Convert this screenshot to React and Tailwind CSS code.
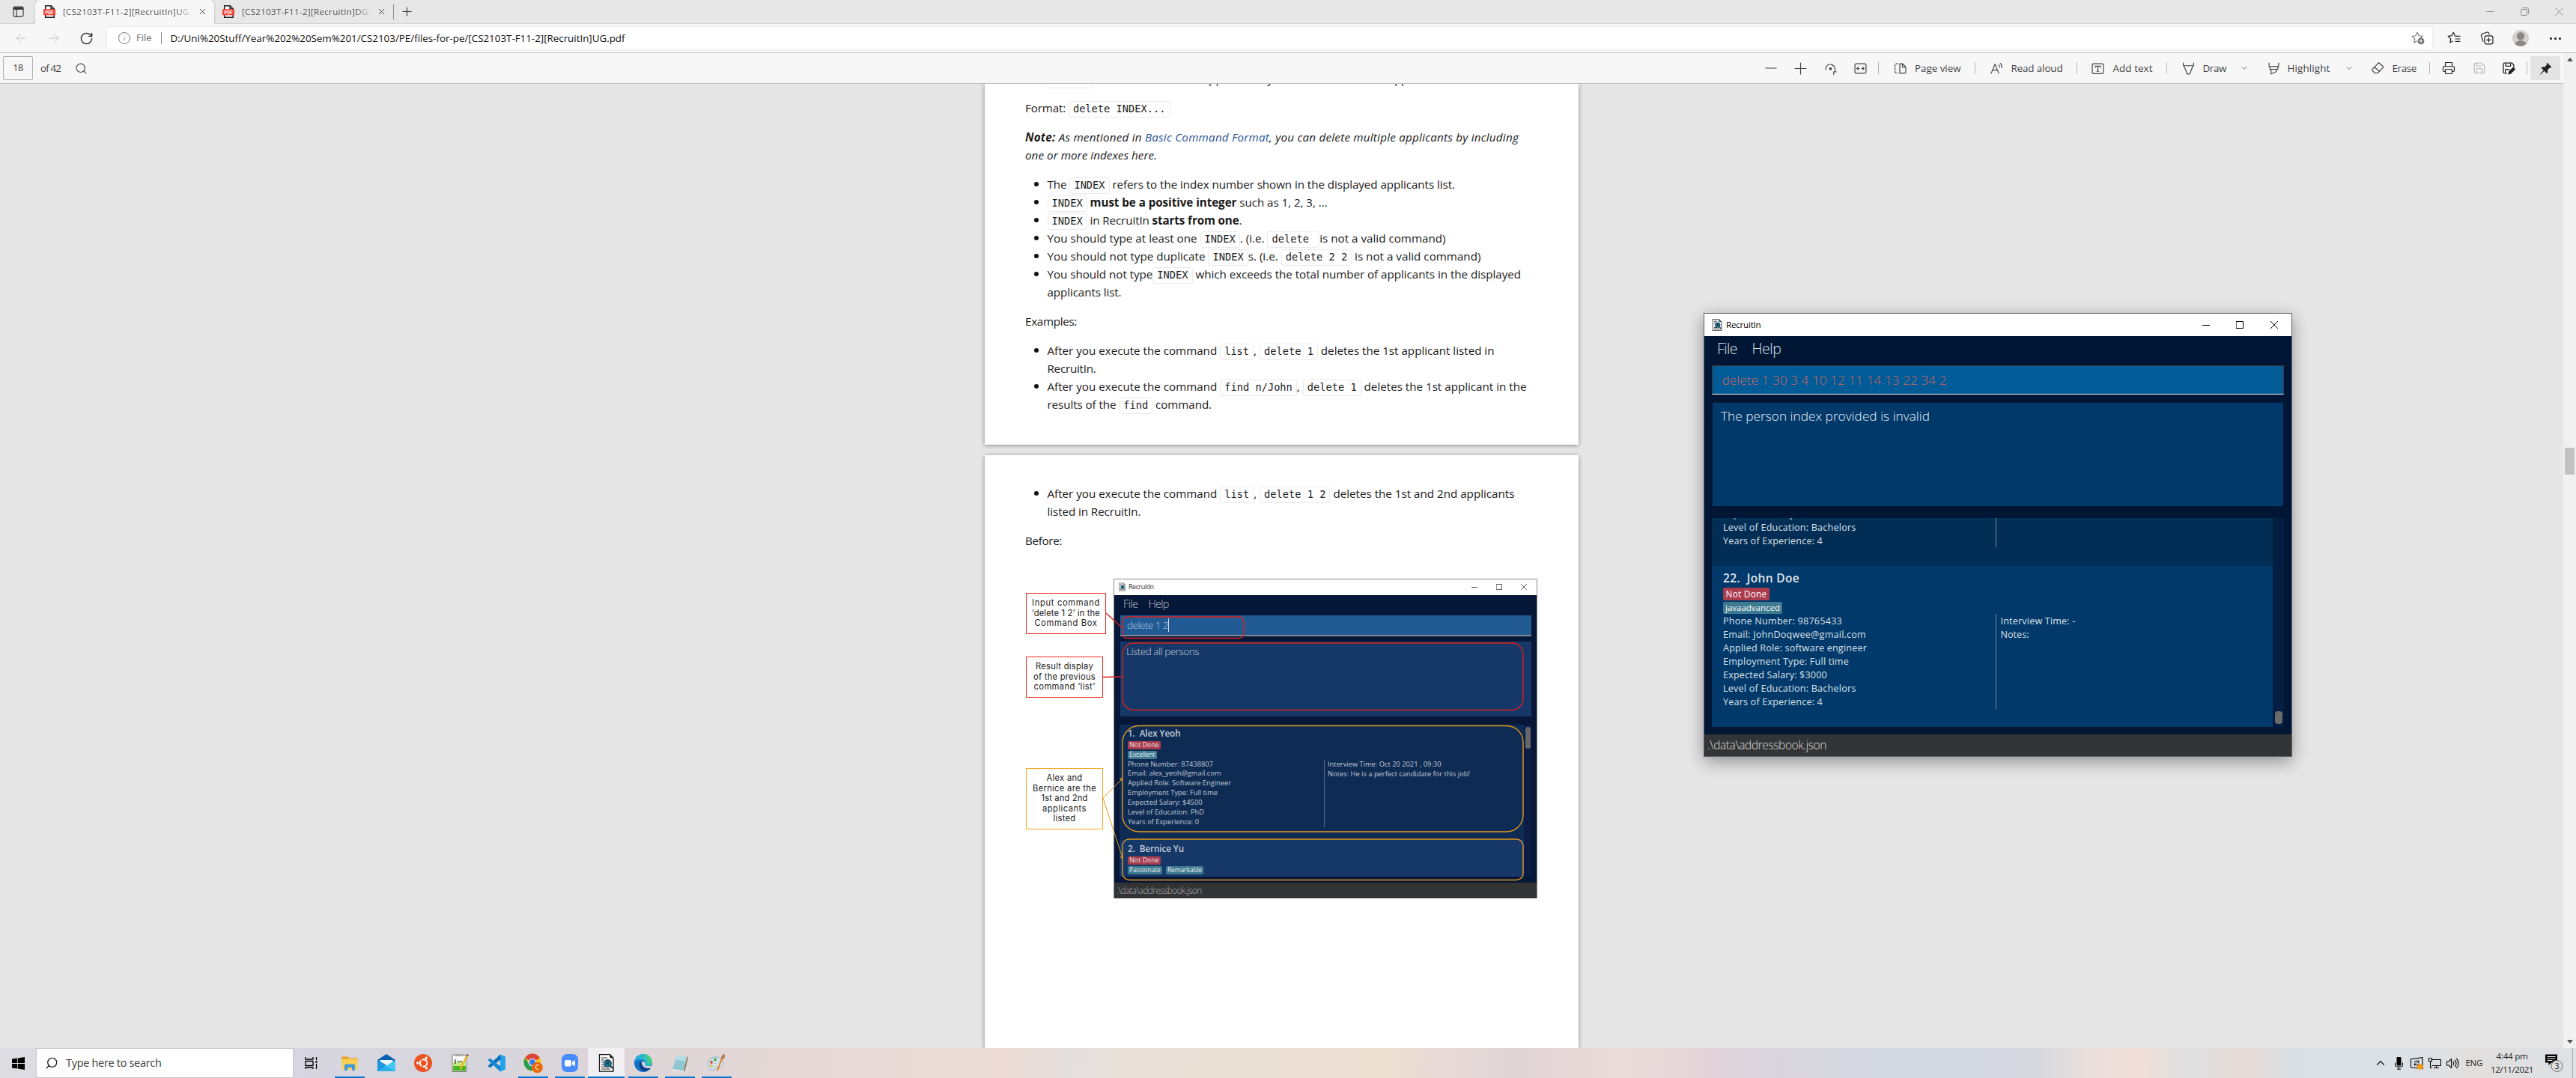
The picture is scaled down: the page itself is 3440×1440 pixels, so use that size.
import React, { useLayoutEffect, useRef } from "react";
import {
  RotateCw, Search, Printer, Save, ArrowLeft, ArrowRight, Info, Plus, X, ChevronDown, ChevronUp,
} from "lucide-react";

/* One line of text, tracked so that it fills exactly `w` pixels. */
function Fit({ w, className = "", children }) {
  const inner = useRef(null);
  useLayoutEffect(() => {
    const el = inner.current;
    el.style.letterSpacing = "0px";
    const natural = el.getBoundingClientRect().width;
    let chars = el.textContent.length;
    el.querySelectorAll("code").forEach((c) => (chars -= c.textContent.length));
    el.style.letterSpacing = `${(w - natural) / Math.max(chars, 1)}px`;
  });
  return (
    <span className={"inline-block whitespace-pre " + className} style={{ width: w }}>
      <span ref={inner}>{children}</span>
    </span>
  );
}

function Code({ children }) {
  return (
    <code className="inline-block h-[22px] whitespace-pre rounded-[3px] border border-[#ebebeb] px-[5px] align-baseline font-['DejaVu_Sans_Mono',monospace] text-[13.7px] leading-[19px] tracking-normal text-[#1c1c1c]">
      {children}
    </code>
  );
}

function Sep({ className = "" }) {
  return <span className={"h-4 w-px shrink-0 bg-[#b5b5b5] " + className} />;
}

function Svg({ s = 16, vb = "0 0 16 16", className = "", children, sw = 1.1 }) {
  return (
    <svg width={s} height={s} viewBox={vb} fill="none" stroke="currentColor" strokeWidth={sw} strokeLinecap="round" strokeLinejoin="round" className={"shrink-0 " + className}>
      {children}
    </svg>
  );
}

/* ---------- Browser chrome ---------- */

function PdfIcon() {
  return (
    <svg width="16" height="17" viewBox="0 0 16 17" className="shrink-0">
      <path d="M2.7.8h7.6l3.9 3.9v11.5H2.7z" fill="#fff" stroke="#1a1a1a" strokeWidth="1.5" />
      <path d="M10 .8v4.1h4.2" fill="none" stroke="#1a1a1a" strokeWidth="1.3" />
      <rect x="0" y="5.2" width="16" height="8.2" fill="#f0453c" />
      <text x="8" y="11.5" textAnchor="middle" fontSize="5.6" fontWeight="700" fill="#fff" fontFamily="Inter, sans-serif">PDF</text>
    </svg>
  );
}

function Tab({ title, active }) {
  return (
    <div className={"flex h-8 w-[239px] shrink-0 items-center pl-[11px] " + (active ? "rounded-t-md bg-[#f7f7f7] shadow-[0_0_3px_rgba(0,0,0,0.25)]" : "")}>
      <PdfIcon />
      <div className="ml-[10px] w-[173px] overflow-hidden text-[11.6px] leading-8 text-[#505050] [mask-image:linear-gradient(to_right,black_88%,transparent)]">
        <Fit w={191}>{title}</Fit>
      </div>
      <X size={13} strokeWidth={1.8} className="ml-[7px] text-[#444]" />
    </div>
  );
}

function TabBar() {
  return (
    <div className="flex h-8 items-center border-b border-[#d2d2d2] bg-[#e7e7e7]">
      <Svg s={15} className="ml-[17px] mr-[15px] text-[#333]" sw={1.2}>
        <rect x="1" y="1" width="14" height="14" rx="2" />
        <path d="M1 4.5h14M5.5 4.5V15" />
        <path d="M2 2.3h12v2H2z" fill="currentColor" />
      </Svg>
      <Tab active title="[CS2103T-F11-2][RecruitIn]UG.pdf" />
      <Tab title="[CS2103T-F11-2][RecruitIn]DG.pdf" />
      <span className="h-[20px] w-px bg-[#8e8e8e]" />
      <Plus size={19} strokeWidth={1.4} className="ml-2 text-[#333]" />
      <div className="ml-auto mr-[17px] flex items-center gap-[35px] text-[#8f8f8f]">
        <Svg s={11} vb="0 0 11 11" sw={1}><path d="M.5 5.5h10" /></Svg>
        <Svg s={11} vb="0 0 11 11" sw={1}>
          <rect x=".5" y="2.5" width="8" height="8" rx="1.5" />
          <path d="M3 .5h5.5a2 2 0 0 1 2 2V8" />
        </Svg>
        <Svg s={11} vb="0 0 11 11" sw={1}><path d="M.5.5l10 10M10.5.5l-10 10" /></Svg>
      </div>
    </div>
  );
}

function AddressBar() {
  return (
    <div className="flex h-[39px] items-center border-b border-[#bcbcbc] bg-[#f7f7f7]">
      <ArrowLeft size={20} strokeWidth={1.2} className="ml-[18px] text-[#c2c2c2]" />
      <ArrowRight size={20} strokeWidth={1.2} className="ml-6 text-[#c2c2c2]" />
      <RotateCw size={19} strokeWidth={1.7} className="ml-6 text-[#222]" />
      <div className="ml-[18px] flex h-[30px] w-[3105px] shrink-0 items-center rounded-[4px] bg-white shadow-[0_0_3px_rgba(0,0,0,0.12)]">
        <Info size={18} strokeWidth={1.3} className="ml-[14px] text-[#777]" />
        <Fit w={20.5} className="ml-[7px] text-[13px] text-[#6e6e6e]">File</Fit>
        <span className="ml-[12px] h-4 w-px bg-[#8a8a8a]" />
        <Fit w={607} className="ml-[12px] text-[13.4px] text-[#111]">
          D:/Uni%20Stuff/Year%202%20Sem%201/CS2103/PE/files-for-pe/[CS2103T-F11-2][RecruitIn]UG.pdf
        </Fit>
        <Svg s={18} vb="0 0 18 18" className="ml-auto mr-[10px] text-[#777]" sw={1.1}>
          <path d="M8.2 1.2l2.1 4.5 4.8.7-2.6 2.7M8.2 1.2L6 5.7l-4.9.7 3.6 3.5-.9 5 3.6-2" />
          <circle cx="13" cy="12.8" r="4.4" fill="#6b6b6b" stroke="none" />
          <path d="M13 10.6V15M10.8 12.8h4.4" stroke="#fff" />
        </Svg>
      </div>
      <Svg s={18} vb="0 0 18 18" className="ml-[20px] text-[#1f1f1f]" sw={1.2}>
        <path d="M10.5 5.9L8.2 1.2 6 5.7l-4.9.7 3.6 3.5-.9 5 3.6-2M11 6.4h6M11 10h6M11 13.4h6" />
      </Svg>
      <Svg s={18} vb="0 0 18 18" className="ml-[26px] text-[#1f1f1f]" sw={1.2}>
        <path d="M4 13.2L1.6 6.4A2.5 2.5 0 0 1 3.1 3.2L8.6 1.2a2.5 2.5 0 0 1 3.2 1.5l.3.9" />
        <rect x="6" y="5.8" width="11" height="11" rx="2.5" fill="#f7f7f7" />
        <path d="M11.5 8.5v5.6M8.7 11.3h5.6" />
      </Svg>
      <svg width="22" height="22" viewBox="0 0 22 22" className="ml-[25px] shrink-0">
        <circle cx="11" cy="11" r="11" fill="#d3d1cd" />
        <circle cx="11" cy="8.3" r="5.2" fill="#8b8783" />
        <path d="M3.500 18.800c1.500-6 13.500-6 15 0a11 11 0 0 1-15 0z" fill="#8b8783" />
      </svg>
      <div className="ml-[28px] flex gap-[3px]">
        <i className="size-[3px] rounded-full bg-[#111]" />
        <i className="size-[3px] rounded-full bg-[#111]" />
        <i className="size-[3px] rounded-full bg-[#111]" />
      </div>
    </div>
  );
}

function PdfToolbar() {
  return (
    <div className="flex h-[41px] w-[3423px] items-center border-b border-[#bcbcbc] bg-[#f7f7f7] text-[13.4px] text-[#444]">
      <div className="ml-1 flex h-8 w-10 items-center justify-center rounded-[2px] border border-[#b0b0b0]">
        <Fit w={13.5} className="text-[12.5px]">18</Fit>
      </div>
      <Fit w={27} className="ml-[10px]">of 42</Fit>
      <Search size={17} strokeWidth={1.6} className="ml-[19px]" />
      <div className="ml-auto mr-1 flex items-center">
        <Svg s={16}><path d="M1 8h14" /></Svg>
        <Svg s={17} className="ml-[23px]"><path d="M1 8h14M8 1v14" /></Svg>
        <Svg s={17} className="ml-[23px]">
          <path d="M1.800 9.500a6 6 0 1 1 10.600 3.200M12 15.600v-3.400h3.500" />
          <circle cx="8" cy="8.300" r="1.200" fill="currentColor" />
        </Svg>
        <Svg s={17} className="ml-[23px]">
          <rect x="1" y="2" width="14" height="12" rx="2" />
          <path d="M3.500 8h3M9.500 8h3M5 6.500L3.500 8 5 9.500M11 6.500L12.500 8 11 9.500" />
        </Svg>
        <Sep className="ml-[15px]" />
        <Svg s={17} className="ml-[20px]">
          <path d="M5 2H3a1.500 1.500 0 0 0-1.500 1.500V12A1.500 1.500 0 0 0 3 13.500h2" strokeDasharray="2.500 1.600" />
          <path d="M7.500 2h3.500l4 4v6.500a1.500 1.500 0 0 1-1.500 1.500H7.500zM10.800 2v4.200H15" />
        </Svg>
        <Fit w={61.5} className="ml-[11px]">Page view</Fit>
        <Sep className="ml-[18px]" />
        <Svg s={17} className="ml-[20px]">
          <path d="M1 14L5.700 2.500 10.500 14M2.600 10h6.200M10.500 3.500a4 4 0 0 1 1 3M12.500 1.500a6.500 6.500 0 0 1 2 5.500" />
        </Svg>
        <Fit w={69} className="ml-[11px]">Read aloud</Fit>
        <Sep className="ml-[18px]" />
        <Svg s={17} className="ml-[19px]">
          <rect x="1" y="2" width="14" height="12.500" rx="2" />
          <path d="M4.800 6.500v-1.500h6.400v1.500M8 5v6.500M6.800 11.500h2.400" />
        </Svg>
        <Fit w={53} className="ml-[12px]">Add text</Fit>
        <Sep className="ml-[18px]" />
        <Svg s={17} className="ml-[20px]"><path d="M1.500 1v3.500h13V1M2.300 4.500L6.500 15h3L13.700 4.500" /></Svg>
        <Fit w={31.5} className="ml-[11px]">Draw</Fit>
        <ChevronDown size={12} strokeWidth={1.5} className="ml-[18px]" />
        <Svg s={17} className="ml-[24.5px]"><path d="M2 1v4.500h12V1M3 5.500v3.500h10V5.500M4.500 9v6l6.500-3V9" /></Svg>
        <Fit w={57} className="ml-[10px]">Highlight</Fit>
        <ChevronDown size={12} strokeWidth={1.5} className="ml-[19px]" />
        <Svg s={18} className="ml-[23px]">
          <path d="M9.500 1.500L14.500 6a1 1 0 0 1 0 1.400L8 14H5L1.700 10.800a1 1 0 0 1 0-1.400zM4.200 6.800l6.200 5" />
        </Svg>
        <Fit w={32.5} className="ml-[11px]">Erase</Fit>
        <Sep className="ml-[17px]" />
        <Printer size={18} strokeWidth={1.6} className="ml-[16px] text-[#222]" />
        <Save size={18} strokeWidth={1.5} className="ml-[23px] text-[#b4b4b4]" />
        <Svg s={17} className="ml-[22px] text-[#222]" sw={1.2}>
          <path d="M5 14H2.500A1.500 1.500 0 0 1 1 12.500v-10A1.500 1.500 0 0 1 2.500 1h9L14 3.500V6M4 1v4h6V1M3.500 14V9h5" />
          <path d="M7.500 15l.8-3 5-5 2 2-5 5z" fill="currentColor" />
        </Svg>
        <Sep className="ml-[15px]" />
        <div className="ml-[4px] flex h-8 w-10 items-center justify-center rounded-[2px] bg-[#e4e4e4]">
          <svg width="17" height="17" viewBox="0 0 16 16" className="text-[#222]">
            <path d="M9.800.6l5.600 5.600-1.300 1-.9-.2-2.700 2.700.1 3.200-1.300 1.200-3-3-4.800 4.500-.6-.6 4.500-4.800-3-3L3.600 6l3.200.1L9.500 3.300 9 2z" fill="currentColor" />
          </svg>
        </div>
      </div>
    </div>
  );
}

function Scrollbar() {
  return (
    <div className="flex h-[1329px] w-[17px] shrink-0 flex-col items-center bg-[#f1f1f1]">
      <svg width="8" height="5" viewBox="0 0 8 5" className="mt-[6px]"><path d="M0 5l4-5 4 5z" fill="#505050" /></svg>
      <div className="mt-[516px] h-[36px] w-[13px] bg-[#c1c1c1]" />
      <svg width="8" height="5" viewBox="0 0 8 5" className="mb-[6px] mt-auto"><path d="M0 0l4 5 4-5z" fill="#505050" /></svg>
    </div>
  );
}

/* ---------- PDF pages ---------- */

function Item({ w, children, bullet = true }) {
  return (
    <li className="flex h-6">
      <span className={"mr-[12px] mt-[9px] size-[6px] shrink-0 rounded-full " + (bullet ? "bg-[#111]" : "")} />
      <Fit w={w}>{children}</Fit>
    </li>
  );
}

function PageOne() {
  return (
    <section className="h-[482px] w-[793px] shrink-0 overflow-hidden bg-white pl-[54px] shadow-[0_1px_6px_rgba(0,0,0,0.4)]">
      <div className="-mt-[19px] flex h-6 pl-[29.5px]">
        <span className="w-[62px]"><Code>delete</Code></span>
        <Fit w={137} className="ml-1">will remove the listed</Fit>
        <Fit w={250}> applicants by their numbers in the</Fit>
        <Fit w={68}> applicants</Fit>
      </div>
      <p className="mt-[15px] h-6"><Fit w={193.5}>Format: <Code>delete INDEX...</Code></Fit></p>
      <p className="mt-[15px] h-12 italic">
        <span className="flex h-6"><Fit w={659}><b>Note:</b> As mentioned in <span className="text-[#2a5396]">Basic Command Format</span>, you can delete multiple applicants by including</Fit></span>
        <span className="flex h-6"><Fit w={176}>one or more indexes here.</Fit></span>
      </p>
      <ul className="mt-[15px] pl-[11.5px]">
        <Item w={544.5}>The <Code>INDEX</Code> refers to the index number shown in the displayed applicants list.</Item>
        <Item w={374}><Code>INDEX</Code> <b>must be a positive integer</b> such as 1, 2, 3, …</Item>
        <Item w={260}><Code>INDEX</Code> in RecruitIn <b>starts from one</b>.</Item>
        <Item w={532}>You should type at least one <Code>INDEX</Code>. (i.e. <Code>{"delete "}</Code>is not a valid command)</Item>
        <Item w={579}>You should not type duplicate <Code>INDEX</Code>s. (i.e. <Code>delete 2 2</Code> is not a valid command)</Item>
        <Item w={632.5}>You should not type<Code>INDEX</Code> which exceeds the total number of applicants in the displayed</Item>
        <Item bullet={false} w={99}>applicants list.</Item>
      </ul>
      <p className="mt-[15px] h-6"><Fit w={69}>Examples:</Fit></p>
      <ul className="mt-[15px] pl-[11.5px]">
        <Item w={597}>After you execute the command <Code>list</Code>, <Code>delete 1</Code> deletes the 1st applicant listed in</Item>
        <Item bullet={false} w={65}>RecruitIn.</Item>
        <Item w={640}>After you execute the command <Code>find n/John</Code>, <Code>delete 1</Code> deletes the 1st applicant in the</Item>
        <Item bullet={false} w={219.5}>results of the <Code>find</Code> command.</Item>
      </ul>
    </section>
  );
}

function Callout({ lines, className }) {
  return (
    <div className={"flex flex-col items-center justify-center border-[1.5px] bg-white font-['Inter',sans-serif] text-[11.2px] leading-[13.4px] text-[#222] " + className}>
      {lines.map(([t, w]) => (
        <Fit key={t} w={w}>{t}</Fit>
      ))}
    </div>
  );
}

function AppIcon({ w = 13, h = 16 }) {
  return (
    <svg width={w} height={h} viewBox="0 0 13 16" className="shrink-0">
      <path d="M.6.6h8.400l3.400 3.400v11.400H.6z" fill="#f2f2f2" stroke="#6d6d6d" strokeWidth="1.1" />
      <path d="M9 .6v3.400h3.400z" fill="#1b4f66" />
      <path d="M2.500 3.300h4M2.500 5.300h2M2.500 11.500h4M2.500 13.300h7.500" stroke="#555" strokeWidth="1" />
      <circle cx="7.300" cy="8.200" r="3.200" fill="#1d86ae" stroke="#17303d" strokeWidth="0.9" />
      <path d="M9.500 10.600l2.700 2.800" stroke="#17303d" strokeWidth="1.3" />
      <path d="M6.500 9.900V6.700h1.300a.8.8 0 0 1 0 1.600H6.500M7.500 8.300l1 1.600" stroke="#08222f" strokeWidth="0.7" fill="none" />
    </svg>
  );
}

function FigBadge({ w, text, className }) {
  return (
    <span className={"flex h-[11.5px] items-center justify-center rounded-[2px] px-[2px] text-[8.6px] leading-[11px] text-[#e4e8ec] " + className}>
      <Fit w={w}>{text}</Fit>
    </span>
  );
}

function Figure() {
  return (
    <div className="relative flex h-[427px] w-[684px]">
      <div className="flex w-[117px] shrink-0 flex-col items-start pt-[19px]">
        <Callout className="h-[55px] w-[107px] border-[#e92c24]" lines={[["Input command", 91], ["‘delete 1 2’ in the", 91], ["Command Box", 84]]} />
        <Callout className="mt-[30px] h-[55px] w-[103px] border-[#e92c24]" lines={[["Result display", 77], ["of the previous", 83], ["command ‘list’", 82]]} />
        <Callout className="mt-[94px] h-[82px] w-[103px] border-[#f5a623]" lines={[["Alex and", 48], ["Bernice are the", 85], ["1st and 2nd", 62], ["applicants", 59], ["listed", 30]]} />
      </div>
      <div className="flex w-[566px] flex-col border-x border-t border-[#8b8b8b] bg-[#071737] text-[#c3cbd6]">
        <div className="flex h-[20.5px] items-center bg-white pl-[6px] text-[9px] text-[#333]">
          <AppIcon w={9} h={12} />
          <Fit w={33.5} className="ml-[4px]">RecruitIn</Fit>
          <Svg s={8} vb="0 0 8 8" sw={1} className="ml-auto text-[#555]"><path d="M0 4.500h7.500" /></Svg>
          <Svg s={8} vb="0 0 8 8" sw={1} className="ml-[25px] text-[#555]"><path d="M.5.500h7v7h-7z" /></Svg>
          <Svg s={8} vb="0 0 8 8" sw={1} className="ml-[25px] mr-[13px] text-[#555]"><path d="M.5.500l7 7M7.500.500l-7 7" /></Svg>
        </div>
        <div className="flex h-[27px] items-center pb-[3px] pl-[12px] text-[14.5px] font-light text-[#b8bfca]">
          <Fit w={19.5}>File</Fit>
          <Fit w={27} className="ml-[14px]">Help</Fit>
        </div>
        <div className="ml-[8px] flex h-[28.5px] w-[549px] items-center border-b-2 border-[#7e8a9c] bg-[#225a93] pl-[9px] text-[13.5px] font-light text-[#b4cfe6]">
          <Fit w={55}>delete 1 2</Fit>
          <span className="h-[18px] w-px bg-[#d6e2ee]" />
        </div>
        <div className="ml-[8px] mt-[7px] h-[99.5px] w-[549px] bg-[#163869] pl-[8px] text-[13.5px] font-light leading-[26px]">
          <Fit w={97}>Listed all persons</Fit>
        </div>
        <div className="ml-[7px] mt-[11.5px] flex h-[203px] w-[550px] overflow-hidden bg-[#0c1c45]">
          <div className="w-[540px] shrink-0">
            <div className="h-[154px] bg-[#0e2b53] pl-[11px] pt-[1px]">
              <div className="h-[20.5px] text-[11.7px] font-semibold leading-[21px]"><Fit w={70.5}>1.  Alex Yeoh</Fit></div>
              <FigBadge w={39.5} text="Not Done" className="w-[44px] bg-[#ab3c4e]" />
              <FigBadge w={34.5} text="Excellent" className="mt-[1.5px] w-[38.5px] bg-[#3e7b91]" />
              <div className="mt-[0.5px] flex text-[9.3px] leading-[12.93px]">
                <div className="flex w-[262px] flex-col">
                  <Fit w={114}>Phone Number: 87438807</Fit>
                  <Fit w={124.5}>Email: alex_yeoh@gmail.com</Fit>
                  <Fit w={138}>Applied Role: Software Engineer</Fit>
                  <Fit w={120}>Employment Type: Full time</Fit>
                  <Fit w={99.5}>Expected Salary: $4500</Fit>
                  <Fit w={102}>Level of Education: PhD</Fit>
                  <Fit w={95}>Years of Experience: 0</Fit>
                </div>
                <div className="flex flex-col border-l border-[#566a89] pl-[4px] pt-[0.5px]">
                  <Fit w={151.5}>Interview Time: Oct 20 2021 , 09:30</Fit>
                  <Fit w={190}>Notes: He is a perfect candidate for this job!</Fit>
                </div>
              </div>
            </div>
            <div className="h-[49px] bg-[#163869] pl-[11px] pt-[1px]">
              <div className="h-[20.5px] text-[11.7px] font-semibold leading-[21px]"><Fit w={75}>2.  Bernice Yu</Fit></div>
              <FigBadge w={39.5} text="Not Done" className="w-[44px] bg-[#ab3c4e]" />
              <div className="mt-[1.5px] flex gap-[5.5px]">
                <FigBadge w={41.5} text="Passionate" className="w-[45.5px] bg-[#3e7b91]" />
                <FigBadge w={46} text="Remarkable" className="w-[50px] bg-[#3e7b91]" />
              </div>
            </div>
          </div>
          <div className="ml-[2px] mt-[3px] h-[29px] w-[7px] rounded-[3px] bg-[#666769]" />
        </div>
        <div className="mt-auto flex h-[21.5px] items-center bg-[#323335] pl-[3px] text-[11.8px] font-light text-[#b0b0b0]">
          <Fit w={113.5}>.\data\addressbook.json</Fit>
        </div>
      </div>
      <svg width="684" height="427" viewBox="0 0 684 427" fill="none" className="pointer-events-none absolute inset-0">
        <g stroke="#d8201f" strokeWidth="1.4">
          <rect x="129" y="51" width="162" height="28.500" rx="6" />
          <rect x="129" y="86" width="535" height="89.500" rx="15" />
          <path d="M107 46l22 20M103 131.500l26-.5" />
        </g>
        <g stroke="#e39a1d" strokeWidth="1.4">
          <rect x="129" y="196.500" width="535" height="141.500" rx="22" />
          <rect x="129" y="348" width="535" height="54.500" rx="9" />
          <path d="M103 293l26-26M103 293l26 80" strokeWidth="1" />
        </g>
        <path d="M129 266l-1 4-3-3zM129 374l-3.500-2 3-1.500z" fill="#e39a1d" />
      </svg>
    </div>
  );
}

function PageTwo() {
  return (
    <section className="mt-[14px] h-[792px] w-[793px] shrink-0 bg-white pl-[54px] pt-[39px] shadow-[0_1px_6px_rgba(0,0,0,0.4)]">
      <ul className="pl-[11.5px]">
        <Item w={624}>After you execute the command <Code>list</Code>, <Code>delete 1 2</Code> deletes the 1st and 2nd applicants</Item>
        <Item bullet={false} w={125}>listed in RecruitIn.</Item>
      </ul>
      <p className="mt-[15px] h-6"><Fit w={49}>Before:</Fit></p>
      <div className="ml-px mt-[39px]"><Figure /></div>
    </section>
  );
}

/* ---------- RecruitIn desktop window ---------- */

function RecruitWindow() {
  return (
    <div className="absolute left-[2275px] top-[418px] flex h-[593px] w-[786px] flex-col border border-[#5d6065] bg-[#011635] shadow-[0_6px_22px_rgba(0,0,0,0.38)]">
      <div className="flex h-[30px] shrink-0 items-center bg-white pl-[10px] text-[11.6px] text-black">
        <AppIcon w={14} h={16} />
        <Fit w={46.5} className="ml-[5px]">RecruitIn</Fit>
        <Svg s={10} vb="0 0 10 10" sw={1} className="ml-auto"><path d="M0 5.500h10" /></Svg>
        <Svg s={10} vb="0 0 10 10" sw={1} className="ml-[35px]"><path d="M.5.500h9v9h-9z" strokeLinejoin="miter" /></Svg>
        <Svg s={10} vb="0 0 10 10" sw={1} className="ml-[36px] mr-[18px]"><path d="M.2.200l9.600 9.600M9.800.200L.2 9.800" /></Svg>
      </div>
      <div className="flex h-[39px] shrink-0 pl-[17px] text-[19.5px] font-light leading-[33px] text-[#dfe3e8]">
        <Fit w={27}>File</Fit>
        <Fit w={39} className="ml-[19.5px]">Help</Fit>
      </div>
      <div className="ml-[10px] h-[39px] w-[764px] shrink-0 border border-b-white border-l-[#383838] border-r-[#383838] border-t-[#383838] bg-[#005b97] pl-[12.5px] text-[17.2px] font-light leading-[37px] text-[#d0665c]">
        <Fit w={300}>delete 1 30 3 4 10 12 11 14 13 22 34 2</Fit>
      </div>
      <div className="ml-[11px] mt-[11px] h-[138px] w-[762px] shrink-0 bg-[#01396b] pl-[11px] pt-[2px] text-[17.2px] font-light leading-[31px] text-[#f0f3f6]">
        <Fit w={279}>The person index provided is invalid</Fit>
      </div>
      <div className="ml-[10px] mt-[16px] flex h-[279px] w-[764px] shrink-0 overflow-hidden bg-[#041d43] text-[12.6px] leading-[18px] text-[#dde2e7]">
        <div className="flex w-[749px] shrink-0 flex-col">
          <div className="flex h-[64px] items-start overflow-hidden bg-[#022d55] pl-[15px]">
            <div className="-mt-[14px] flex w-[364px] flex-col">
              <Fit w={139}>Expected Salary: $3000</Fit>
              <Fit w={177.5}>Level of Education: Bachelors</Fit>
              <Fit w={133}>Years of Experience: 4</Fit>
            </div>
            <div className="h-[39px] w-px bg-[#6f8ba6]" />
          </div>
          <div className="h-[215px] bg-[#01396b] pl-[15px]">
            <div className="h-[29px] text-[15.5px] font-semibold leading-[32px] text-[#e3e6ea]"><Fit w={102}>22.  John Doe</Fit></div>
            <div className="flex h-[17px] w-[62px] justify-center rounded-[2px] bg-[#ab3c4e] text-[11.8px] leading-[16px] text-white"><Fit w={55}>Not Done</Fit></div>
            <div className="mt-[2px] flex h-[16px] w-[79px] justify-center rounded-[2px] bg-[#3e7b91] text-[11.5px] leading-[15px] text-white"><Fit w={73}>javaadvanced</Fit></div>
            <div className="flex">
              <div className="flex w-[364px] flex-col pt-[0.5px]">
                <Fit w={159}>Phone Number: 98765433</Fit>
                <Fit w={191}>Email: JohnDoqwee@gmail.com</Fit>
                <Fit w={192}>Applied Role: software engineer</Fit>
                <Fit w={168}>Employment Type: Full time</Fit>
                <Fit w={139}>Expected Salary: $3000</Fit>
                <Fit w={177.5}>Level of Education: Bachelors</Fit>
                <Fit w={133}>Years of Experience: 4</Fit>
              </div>
              <div className="flex flex-col border-l border-[#6f8ba6] pl-[5.5px] pt-[1px]">
                <Fit w={100}>Interview Time: -</Fit>
                <Fit w={38}>Notes:</Fit>
              </div>
            </div>
          </div>
        </div>
        <div className="mb-[4px] ml-[3px] mt-auto h-[17px] w-[10px] rounded-[4px] bg-[#6b6b6b]" />
      </div>
      <div className="mt-auto h-[29px] shrink-0 bg-[#333436] pl-[4px] text-[15.5px] font-light leading-[28px] text-[#dcdcdc]">
        <Fit w={159}>.\data\addressbook.json</Fit>
      </div>
    </div>
  );
}

/* ---------- Taskbar ---------- */

function TaskButton({ running, active, children }) {
  return (
    <div className={"flex h-10 w-[49px] shrink-0 flex-col items-center " + (active ? "bg-[#f1eff1]" : "")}>
      <div className="flex h-[38px] items-center pt-[2px]">{children}</div>
      <div className={"h-[2px] " + (active ? "w-[49px] bg-[#0078d7]" : running ? "w-10 bg-[#0078d7]" : "w-0")} />
    </div>
  );
}

const box = { width: 24, height: 24, viewBox: "0 0 24 24" };

function Taskbar() {
  return (
    <footer className="flex h-10 items-center bg-[linear-gradient(to_right,#dcdce1_0%,#d7d6e0_12%,#d8d5dc_20%,#e2d6d6_28%,#ecdcd5_39%,#e4dfe0_42%,#e9e0d8_43.5%,#ecdfd2_54%,#e6d9d6_56%,#e2d5d8_59%,#eadad8_63%,#e2d4da_66.5%,#d9d5de_69%,#d3d8e2_74%,#d6d8e0_79%,#eadfdc_81%,#f1dfd8_83%,#dedfe0_85%,#e7d9d6_87.2%,#d9dfe3_89%,#dae1e7_93%,#e1dfde_96%,#dfe1e5_100%)] text-[#111]">
      <svg width="17" height="17" viewBox="0 0 16 16" className="ml-[16px] shrink-0"><path d="M0 2.300l6.500-.9v6.200H0zM7.300 1.300L16 0v7.600H7.300zM0 8.400h6.500v6.200L0 13.700zM7.300 8.400H16V16l-8.700-1.300z" fill="#000" /></svg>
      <div className="ml-[15px] flex h-10 w-[344px] shrink-0 items-center border border-[#c6c6c6] bg-white text-[14.5px]">
        <Search size={18} strokeWidth={1.6} className="ml-[11px] -scale-x-100" />
        <Fit w={127.5} className="ml-[10px] text-[#3a3a3a]">Type here to search</Fit>
      </div>
      <Svg s={18} vb="0 0 18 18" className="ml-[15px] text-black" sw={1.3}>
        <path d="M1 1v3h10V1M1 6.500h10v6H1zM1 17v-2h10v2M15.500 1v4M15.500 10v7" strokeLinecap="butt" />
        <path d="M14.300 6.300h2.400v2.400h-2.400z" fill="currentColor" stroke="none" />
      </Svg>
      <div className="ml-[17px] flex">
        <TaskButton running>
          <svg {...box}><path d="M1.500 3.500h8l2 2h11v5h-21z" fill="#e8a317" /><path d="M1.500 6.500h21V20a1 1 0 0 1-1 1H2.500a1 1 0 0 1-1-1z" fill="#fcd053" /><path d="M5 22v-6.500a2 2 0 0 1 2-2h10a2 2 0 0 1 2 2V22h-4v-4H9v4z" fill="#3d9be0" /></svg>
        </TaskButton>
        <TaskButton>
          <svg {...box}><path d="M0 8L12 0l12 8v4H0z" fill="#0b5fb0" /><path d="M3.500 8h17v7h-17z" fill="#e9f4fb" /><path d="M0 8l12 8 12-8v15H0z" fill="#27b1ee" /><path d="M0 23l12-8.500L0 8z" fill="#1c97dd" /><path d="M12 16L24 23V8z" fill="#43c8f5" /></svg>
        </TaskButton>
        <TaskButton>
          <svg {...box}><circle cx="12" cy="12" r="12" fill="#e95420" /><circle cx="12.500" cy="12" r="4.800" fill="none" stroke="#fff" strokeWidth="2" strokeDasharray="8.600 1.450" /><circle cx="4.700" cy="12" r="1.700" fill="#fff" /><circle cx="16.300" cy="5.300" r="1.700" fill="#fff" /><circle cx="16.300" cy="18.700" r="1.700" fill="#fff" /></svg>
        </TaskButton>
        <TaskButton>
          <svg {...box}><path d="M2 1h16l3 3v19.500H2z" fill="#fbfbfb" stroke="#7b7b7b" /><path d="M3 11h17v11.500H3z" fill="#4bb51f" /><path d="M3 11h17v5H3z" fill="#c3ea7c" /><path d="M5 2.500h11" stroke="#555" strokeDasharray="1 1" /><path d="M6 7v6M9 10h2.500M12.500 10H15" stroke="#333" strokeWidth="1.3" /><path d="M22.500 1L14 17l-1 3" stroke="#e8b51e" strokeWidth="2.6" fill="none" /><path d="M22.600.500l-1 2" stroke="#7a4a2a" strokeWidth="2.6" /></svg>
        </TaskButton>
        <TaskButton>
          <svg {...box}><path d="M17 .5l7 3v17l-7 3z" fill="#23a3ea" /><path d="M17 .5L1.200 15.200a1 1 0 0 0 0 1.500l1.500 1.300a1 1 0 0 0 1.300 0L18 7z" fill="#0b74bd" /><path d="M17 23.500L1.200 8.800a1 1 0 0 1 0-1.500L2.700 6A1 1 0 0 1 4 6l14 11z" fill="#1489d2" /></svg>
        </TaskButton>
        <TaskButton running>
          <svg width="26" height="28" viewBox="0 0 26 28"><circle cx="12" cy="13" r="11.500" fill="#fbc116" /><path d="M12 13L2.040 7.250A11.500 11.500 0 0 1 21.960 7.250z" fill="#de4437" /><path d="M2.040 7.250A11.500 11.500 0 0 0 11 24.450L16.300 15.500 7.500 15z" fill="#2a9c50" /><circle cx="12" cy="13" r="5.300" fill="#fff" /><circle cx="12" cy="13" r="4.200" fill="#3b7ded" /><circle cx="18.500" cy="20" r="7.300" fill="#ea6a0c" /><text x="18.500" y="23" textAnchor="middle" fontSize="8.5" fill="#fff" fontFamily="Open Sans, sans-serif">C</text></svg>
        </TaskButton>
        <TaskButton running>
          <svg {...box}><rect x="1" y="0" width="22" height="24" rx="7" fill="#4a8cff" /><rect x="5" y="8" width="9" height="8.500" rx="2" fill="#fff" /><path d="M15 10.800L19 8v8.500l-4-2.800z" fill="#fff" /></svg>
        </TaskButton>
        <TaskButton running active>
          <svg {...box}><path d="M2.500.700h14L21 5.200v18H2.500z" fill="#fff" stroke="#111" strokeWidth="1.3" /><path d="M16.500.700v4.500H21z" fill="#111" /><path d="M5 5h8M5 8h4M5 11h3M5 14h3M5 17h6M5 20h12" stroke="#222" strokeWidth="1.2" /><circle cx="13.500" cy="12.500" r="4.800" fill="#1b8fb3" stroke="#17303d" strokeWidth="1.2" /><path d="M17 16l4 3.500" stroke="#17303d" strokeWidth="2" /><path d="M12 15.500v-6h2a1.500 1.500 0 0 1 0 3h-2M13.600 12.500l1.700 3" stroke="#06202c" fill="none" /></svg>
        </TaskButton>
        <TaskButton running>
          <svg {...box}>
            <defs>
              <linearGradient id="edgeTop" x1="0" x2="1" y1=".6" y2=".3"><stop offset="0" stopColor="#1f9fe0" /><stop offset=".55" stopColor="#27bcd0" /><stop offset="1" stopColor="#5fda55" /></linearGradient>
            </defs>
            <circle cx="12" cy="12" r="12" fill="#1173c6" />
            <path d="M.2 10.500C1.500 3.500 6.500 0 12 0c7.500 0 12 5 12 10.200 0 3.500-2.700 6-6.200 6-3 0-3.800-1-3.300-2.200 1.500-3-.5-6.500-5-6.500C5 7.500 1 9 .2 10.500z" fill="url(#edgeTop)" />
            <path d="M9 9.500c-4.500 3-2.500 12 5 13.500 3 0 7-2.500 8-4.800-6.500 2.800-13.500-1.200-13-8.700z" fill="#0b3f86" />
            <path d="M10.500 10c-1.500 4.500 2.500 9 7.500 9 2 0 3.500-.6 4.200-.8l1.800-2-1-1c-1.500.8-3.200 1.100-5.200 1-3 0-3.800-1-3.300-2.200.8-2-.5-4-4-4z" fill="#d9d4da" />
          </svg>
        </TaskButton>
        <TaskButton running>
          <svg {...box}><path d="M8 1.500l13.500 2L17 22.500 2 20z" fill="#8fc6d3" /><path d="M8 1.500l13.500 2-1.500 6.200-14-2z" fill="#b7dde4" /><path d="M21.500 3.500l1.500 1-4.500 19-1.500-1z" fill="#8d7a5c" /><path d="M2 20l15 2.500 1.500 1L3 21.500z" fill="#f2f2f2" /></svg>
        </TaskButton>
        <TaskButton running>
          <svg {...box}><path d="M10 4C4 4.500 0 9 .5 14.500S5 23 8 22c2-.8 1-3 3-4s4.500 1.500 7 0 3.500-5 2-8.500S15 3.600 10 4z" fill="#cfe3ef" stroke="#86a9bf" strokeWidth=".8" /><circle cx="5" cy="11" r="1.900" fill="#e24b3a" /><circle cx="10" cy="7.500" r="1.900" fill="#4aa84a" /><circle cx="4.800" cy="16" r="1.900" fill="#e9b93a" /><circle cx="9.500" cy="14" r="1.800" fill="#fff" stroke="#8aa" strokeWidth=".6" /><path d="M20.500 2L13 22" stroke="#e58a2b" strokeWidth="2.2" /><path d="M18 6c0-3 1-5 4-6 2 2 1.500 5-1.500 7z" fill="#b0825a" /></svg>
        </TaskButton>
      </div>
      <div className="ml-auto flex items-center">
        <ChevronUp size={18} strokeWidth={1.6} />
        <svg width="11" height="17" viewBox="0 0 11 17" className="ml-[10px]"><rect x="2.500" y="0" width="6" height="11.500" rx="1" fill="#000" /><path d="M.5 7.500v3.500a2 2 0 0 0 2 2h6a2 2 0 0 0 2-2V7.500M5.500 13v3M3 16.300h5" fill="none" stroke="#000" /></svg>
        <svg width="17" height="17" viewBox="0 0 17 17" className="ml-[10px]"><path d="M.5 2.700L16 .7v15l-15.500-2z" fill="none" stroke="#000" strokeWidth="1.1" /><path d="M11 4.500v2.500H8.500M5.500 11.500V9H8M5 7.500A3.200 3.200 0 0 1 10.800 6.500M11.300 8.500A3.200 3.200 0 0 1 5.600 9.700" fill="none" stroke="#000" /><circle cx="12.800" cy="13" r="3.800" fill="#ff9a0c" /></svg>
        <svg width="17" height="15" viewBox="0 0 17 15" className="ml-[7px]"><path d="M5 2.500h11.500v8H4.500M10.500 10.500v3M7 13.500h7M.5.700h4v4h-4zM2.500 4.700v8.800h2.500" fill="none" stroke="#000" strokeWidth="1.1" /></svg>
        <svg width="17" height="15" viewBox="0 0 17 15" className="ml-[7px]"><path d="M.5 5h2.500L6.500 1.700v11.600L3 10H.5zM8.700 5a3.500 3.500 0 0 1 0 5M11 3a6 6 0 0 1 0 9M13.300 1a9 9 0 0 1 0 13" fill="none" stroke="#000" strokeWidth="1.1" /></svg>
        <Fit w={22.5} className="ml-[9px] text-[11.6px] text-[#222]">ENG</Fit>
        <div className="ml-[11px] flex w-[57px] flex-col items-center text-[11.6px] leading-[18px] text-[#222]">
          <Fit w={42}>4:44 pm</Fit>
          <Fit w={57}>12/11/2021</Fit>
        </div>
        <svg width="25" height="26" viewBox="0 0 25 26" className="ml-[15px]"><path d="M1 1.500h16v11H9l-3.500 3.500v-3.500H1z" fill="#000" /><path d="M3.500 4.500h11M3.500 7h11M3.500 9.500h7" stroke="#fff" strokeWidth="1" /><circle cx="16.500" cy="17" r="7.500" fill="#dcdcdc" stroke="#6d6d6d" /><text x="16.500" y="20.700" textAnchor="middle" fontSize="10" fill="#111" fontFamily="Open Sans, sans-serif">3</text></svg>
        <span className="ml-[12px] mr-[4px] h-10 w-px bg-[#a9abaf]" />
      </div>
    </footer>
  );
}

export default function App() {
  return (
    <div className="relative flex h-[1440px] w-[3440px] flex-col overflow-hidden bg-[#e6e6e6] font-['Open_Sans',sans-serif]">
      <TabBar />
      <AddressBar />
      <div className="flex h-[1329px] shrink-0">
        <div className="flex w-[3423px] shrink-0 flex-col">
          <PdfToolbar />
          <main className="flex h-[1288px] flex-col items-center overflow-hidden text-[15.2px] leading-6 text-[#1a1a1a]">
            <PageOne />
            <PageTwo />
          </main>
        </div>
        <Scrollbar />
      </div>
      <Taskbar />
      <RecruitWindow />
    </div>
  );
}
